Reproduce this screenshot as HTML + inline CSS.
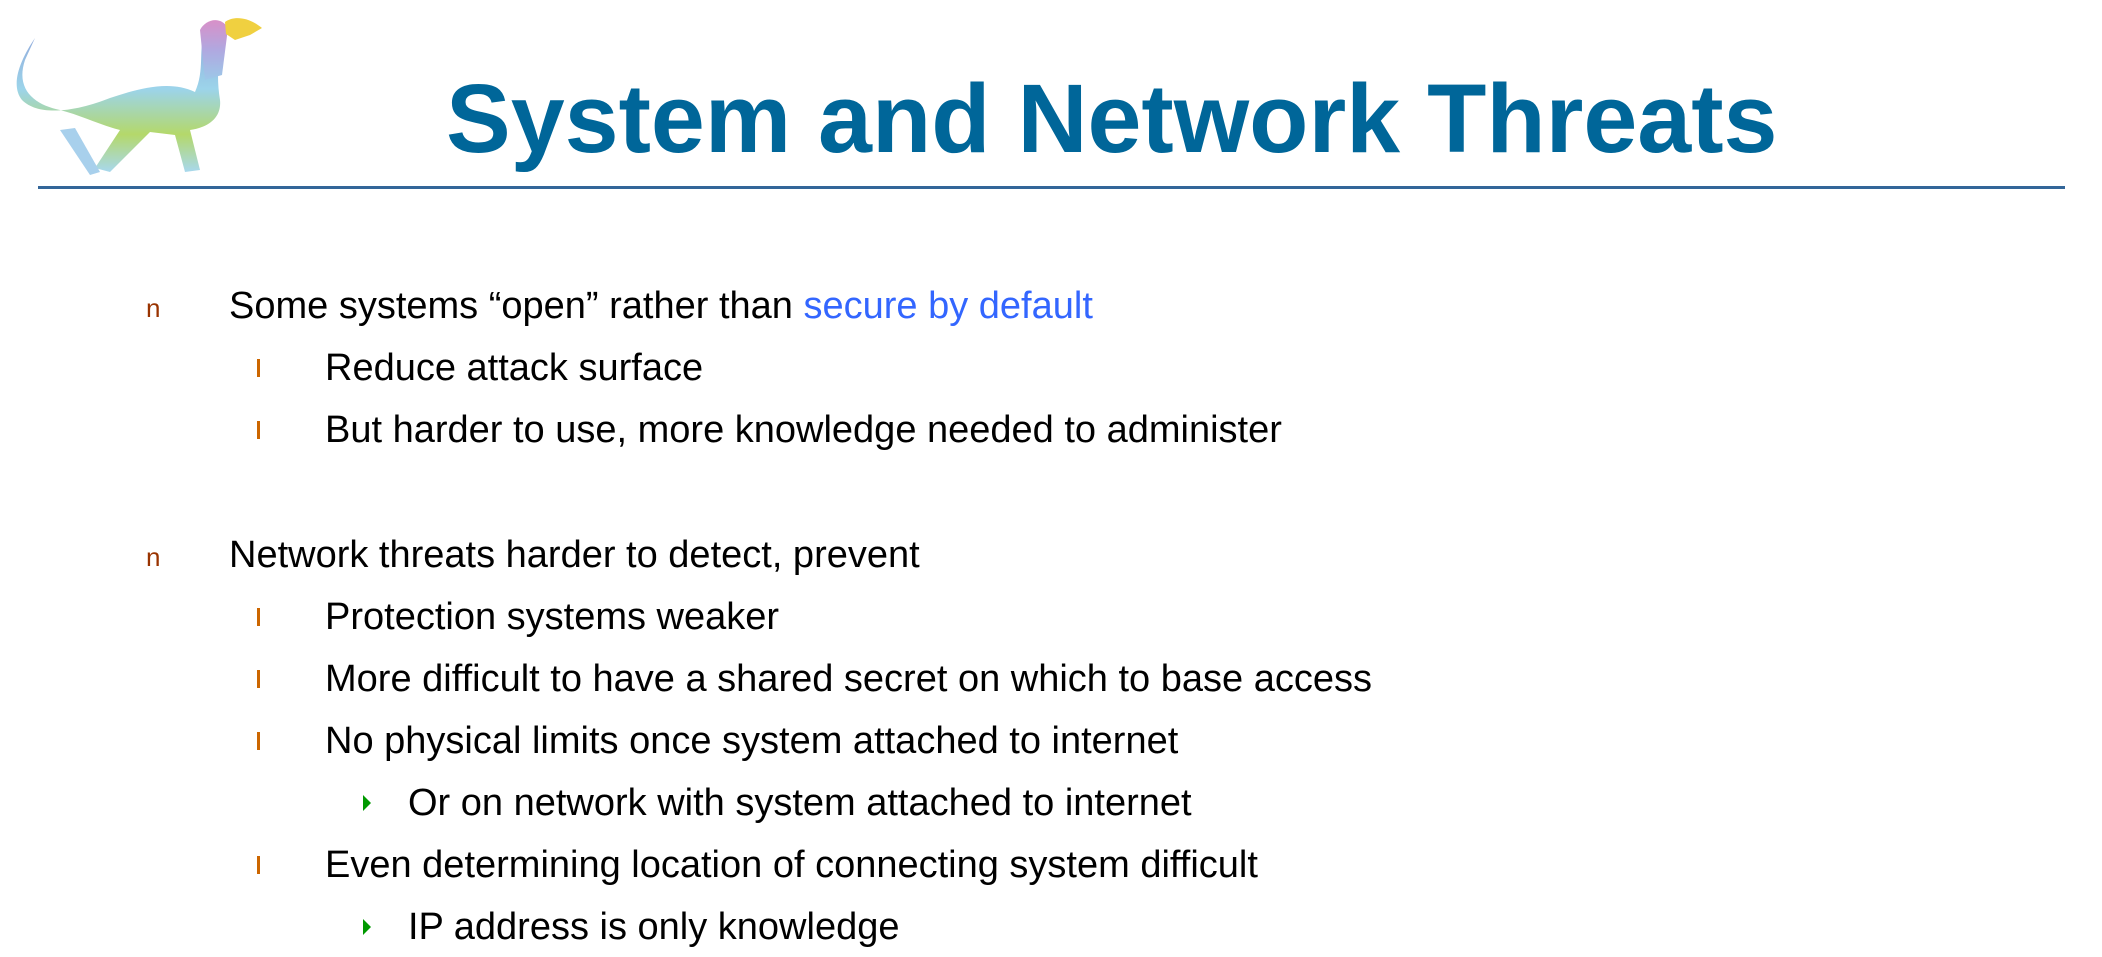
<!DOCTYPE html>
<html><head><meta charset="utf-8"><style>
html,body{margin:0;padding:0;background:#fff;width:2102px;height:957px;overflow:hidden;position:relative;font-family:"Liberation Sans",Arial,sans-serif}
.t{position:absolute;left:446px;top:70px;font-size:97px;font-weight:bold;color:#006699;white-space:nowrap;line-height:1}
.hr{position:absolute;left:38px;top:186px;width:2027px;height:3px;background:#336699}
.r{position:absolute;font-size:38px;line-height:1;color:#000;white-space:nowrap}
.b1{position:absolute;color:#993300;font-size:26px;line-height:1}
.b2{position:absolute;width:3px;height:18px;background:#cc6600}
.b3{position:absolute;width:0;height:0;border-top:8px solid transparent;border-bottom:8px solid transparent;border-left:8px solid #009900}
</style></head><body>
<svg style="position:absolute;left:0;top:0" width="280" height="190" viewBox="0 0 280 190">
<defs><linearGradient id="g" x1="0" y1="0" x2="0" y2="1"><stop offset="0" stop-color="#8fa0d8"/><stop offset=".45" stop-color="#9cd4ea"/><stop offset=".75" stop-color="#b4d86a"/><stop offset="1" stop-color="#a8d8ee"/></linearGradient>
<linearGradient id="n" x1="0" y1="0" x2="0" y2="1"><stop offset="0" stop-color="#d890c8"/><stop offset=".5" stop-color="#b0a8e0"/><stop offset="1" stop-color="#9cc8e8"/></linearGradient></defs>
<path d="M35 38 C20 60 10 85 22 100 C40 118 80 110 110 98 C140 88 170 80 195 92 C205 70 198 50 205 30 C210 20 222 18 228 28 C220 40 215 70 220 100 C222 120 205 128 190 130 L200 170 L185 172 L175 135 L150 132 L110 172 L95 168 L120 130 C100 125 80 115 60 110 C35 105 15 90 25 60 Z" fill="url(#g)"/>
<path d="M200 30 C205 20 220 15 228 28 L222 75 L205 80 Z" fill="url(#n)"/>
<path d="M225 22 C235 15 250 18 262 28 L250 35 L235 40 L226 34 Z" fill="#f0d040"/>
<path d="M60 130 L90 175 L100 172 L75 128 Z" fill="#a8d0ec"/>
</svg>
<div class="t">System and Network Threats</div>
<div class="hr"></div>

<div class="b1" style="left:146px;top:295px">n</div>
<div class="r" style="left:229px;top:287px">Some systems “open” rather than <span style="color:#3366ff">secure by default</span></div>
<div class="b2" style="left:257px;top:359px"></div>
<div class="r" style="left:325px;top:349px">Reduce attack surface</div>
<div class="b2" style="left:257px;top:421px"></div>
<div class="r" style="left:325px;top:411px">But harder to use, more knowledge needed to administer</div>

<div class="b1" style="left:146px;top:544px">n</div>
<div class="r" style="left:229px;top:536px">Network threats harder to detect, prevent</div>
<div class="b2" style="left:257px;top:608px"></div>
<div class="r" style="left:325px;top:598px">Protection systems weaker</div>
<div class="b2" style="left:257px;top:670px"></div>
<div class="r" style="left:325px;top:660px">More difficult to have a shared secret on which to base access</div>
<div class="b2" style="left:257px;top:732px"></div>
<div class="r" style="left:325px;top:722px">No physical limits once system attached to internet</div>
<div class="b3" style="left:363px;top:795px"></div>
<div class="r" style="left:408px;top:784px">Or on network with system attached to internet</div>
<div class="b2" style="left:257px;top:856px"></div>
<div class="r" style="left:325px;top:846px">Even determining location of connecting system difficult</div>
<div class="b3" style="left:363px;top:919px"></div>
<div class="r" style="left:408px;top:908px">IP address is only knowledge</div>
</body></html>
